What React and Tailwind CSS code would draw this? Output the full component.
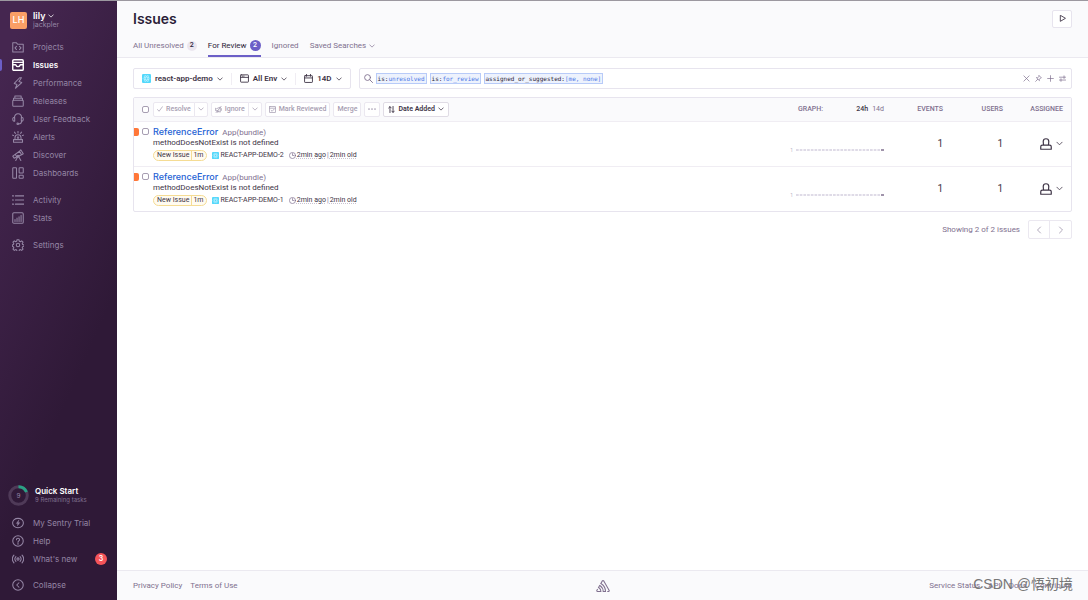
import React from "react";

const shapes = {
  projects: (
    <>
      <path d="M1 2.2h4.6l1.8 2h7.6v10.4H1z" />
      <path d="M6 7.2 4 9.3l2 2.1M10 7.2l2 2.1-2 2.1" />
    </>
  ),
  issues: (
    <>
      <rect x="1" y="1" width="14" height="14" rx="1.5" />
      <path d="M1 4.5h14M1 7.6h3.5c.4 0 .6.2.8.6.5 1.400 1.500 2 2.700 2s2.200-.6 2.700-2c.2-.4.4-.6.8-.6H15" />
    </>
  ),
  performance: <path d="M10.200 1 3 8.600l3.600 1.500L4.600 15 13 7.400 9.300 5.900 12.600 1z" />,
  releases: (
    <>
      <rect x="1" y="7" width="14" height="8" rx="1" />
      <path d="M2 7V4.200h12V7M3.800 4.200V1.200h8.400v3" />
    </>
  ),
  feedback: (
    <>
      <path d="M3.200 6.500C3.200 3.400 5.200 1 8 1s4.800 2.400 4.800 5.500M12.800 10.500c0 2.300-1.600 4-4.200 4" />
      <path d="M3.600 6H2.500C1.500 6 1 7 1 8.400s.5 2.400 1.500 2.400h1.100zM12.400 6h1.100c1 0 1.500 1 1.500 2.400s-.5 2.400-1.500 2.400h-1.100z" />
      <circle cx="7.600" cy="14.300" r="1" />
    </>
  ),
  alerts: (
    <>
      <path d="M4 11.500V8.800C4 6.500 5.800 5 8 5s4 1.500 4 3.800v2.700M2 11.500h12V15H2zM8 .5v2M3.300 1.500l1.200 1.600M12.700 1.500l-1.200 1.600M.5 5.500l1.600.6M15.500 5.500l-1.600.6" />
      <path d="M8 7.500v3M7 9h2" />
    </>
  ),
  discover: (
    <>
      <path d="M1 9.500 10 3l2.800 4.600-9.900 4.600zM10 3l1.700-1.900 3.300 5.200-2.200 1.300M4.500 7.200l1.800 3.200" />
      <path d="M7.500 10.500 5 15.300M8.800 10l3 5.300" />
      <circle cx="8" cy="9.700" r="1.300" />
    </>
  ),
  dashboards: (
    <>
      <rect x="1" y="1" width="5" height="14" rx=".8" />
      <rect x="9.500" y="1" width="5.500" height="7" rx=".8" />
      <rect x="9.500" y="11" width="5.500" height="4" rx=".8" />
    </>
  ),
  activity: <path d="M4.500 2.500H16M4.500 8H16M4.500 13.500H16M.5 2.500h1.500M.5 8h1.500M.5 13.500h1.500" />,
  stats: (
    <>
      <rect x="1" y="1" width="14" height="14" rx="1.500" />
      <path d="M4 12.500V10M6.700 12.500V8M9.400 12.500V6.500M12.100 12.500v-8" />
    </>
  ),
  settings: (
    <>
      <path d="M6.700 1h2.600l.5 2 1.300.6 1.800-1.100 1.800 1.800-1.100 1.800.6 1.300 2 .5v1.800l-2 .5-.6 1.400 1.100 1.800-1.800 1.800-1.800-1.100-1.300.6-.5 2H6.700l-.5-2-1.300-.6-1.800 1.100-1.800-1.800 1.100-1.800-.6-1.400-1.300-.3V7.700l1.300-.3.600-1.300-1.100-1.800 1.800-1.800 1.800 1.100L6.200 3z" />
      <circle cx="8" cy="8" r="2.300" />
    </>
  ),
  trial: (
    <>
      <ellipse cx="8" cy="8" rx="7.200" ry="6.200" />
      <path d="M8.800 4.500 5.800 8.500h2L7.300 11.500l3-4h-2z" fill="currentColor" strokeWidth=".6" />
    </>
  ),
  help: (
    <>
      <circle cx="8" cy="8" r="7" />
      <path d="M5.900 6.400c0-1.300.9-2.100 2.100-2.100s2.100.8 2.100 1.900c0 1.600-2.100 1.600-2.100 3.300M8 11v1.300" />
    </>
  ),
  broadcast: (
    <>
      <circle cx="8" cy="8" r="1.500" />
      <path d="M5.200 4.800C3.700 6.500 3.700 9.500 5.200 11.200M10.800 4.800c1.500 1.700 1.500 4.700 0 6.400M2.600 2.800c-2.500 3-2.500 7.400 0 10.400M13.400 2.800c2.500 3 2.500 7.400 0 10.400" />
    </>
  ),
  collapse: (
    <>
      <circle cx="8" cy="8" r="7" />
      <path d="M9.300 5 6.300 8l3 3" />
    </>
  ),
  down: <path d="m2 5 6 6 6-6" />,
  left: <path d="m11 2-6 6 6 6" />,
  right: <path d="m5 2 6 6-6 6" />,
  play: <path d="M3 1.500v13L14 8z" />,
  window: (
    <>
      <rect x="1" y="1.500" width="14" height="13" rx="1" />
      <path d="M1 6h14M4 3.800h.8M6.500 3.800h.8" />
    </>
  ),
  calendar: (
    <>
      <rect x="1" y="3" width="14" height="12" rx="1" />
      <path d="M1 7h14M4.500 .5V4M11.500 .5V4" />
    </>
  ),
  search: (
    <>
      <circle cx="6.300" cy="6.300" r="5.200" />
      <path d="m10.200 10.200 5 5" />
    </>
  ),
  close: <path d="m2 2 12 12M14 2 2 14" />,
  pin: <path d="m9.500 1.500 5 5-2 .5-2.500 2.800.2 3.200L3 6l3.200.1L9 3.500zM6.300 9.700 1.500 14.500" />,
  plus: <path d="M8 1.500v13M1.500 8h13" />,
  sliders: <path d="M1 5h14M11.500 2v6M15 11.500H1M4.500 8.500v6" />,
  check: <path d="m1.500 9.500 4 4.500L14.500 2" />,
  mute: <path d="M1 6v4.500h3L12 14V2.500L4 6zM5 10.500V14h2.500v-2.500M14.500 6v4M2.500 15 14 1" />,
  reviewed: (
    <>
      <rect x="1" y="1" width="14" height="14" rx="1" />
      <path d="M1 5h14M5 10l2.200 2L11.500 7.500" />
    </>
  ),
  sort: <path d="M4.500 15V1.500M1.500 4.500l3-3 3 3M11.500 1v13.500M8.500 11.500l3 3 3-3" />,
  clock: (
    <>
      <circle cx="8" cy="8" r="7" />
      <path d="M8 3.500V8h3.500" />
    </>
  ),
  user: <path d="M5.200 9.500C4.300 8.500 4.300 6.500 4.300 4.700 4.300 2.300 5.800 1 8 1s3.700 1.300 3.700 3.700c0 1.800 0 3.800-.9 4.800M5.200 9.500h5.600M5.200 9.500H3C1.800 9.500 1 10.400 1 11.700V15h14v-3.300c0-1.300-.8-2.200-2-2.200h-2.200" />,
};

function Icon({ name, className = "size-3", weight = 1.4 }) {
  return (
    <svg
      viewBox="0 0 16 16"
      className={"shrink-0 " + className}
      fill="none"
      stroke="currentColor"
      strokeWidth={weight}
      strokeLinecap="round"
      strokeLinejoin="round"
      aria-hidden="true"
    >
      {shapes[name]}
    </svg>
  );
}

function ReactBadge({ className }) {
  return (
    <svg viewBox="0 0 16 16" className={"shrink-0 " + className} aria-hidden="true">
      <rect width="16" height="16" rx="2" fill="#53d8fb" />
      <g fill="none" stroke="#c4f3ff" strokeWidth="1">
        <ellipse cx="8" cy="8" rx="6" ry="2.400" />
        <ellipse cx="8" cy="8" rx="6" ry="2.400" transform="rotate(60 8 8)" />
        <ellipse cx="8" cy="8" rx="6" ry="2.400" transform="rotate(120 8 8)" />
      </g>
    </svg>
  );
}

const navGroups = [
  [
    ["projects", "Projects"],
    ["issues", "Issues"],
    ["performance", "Performance"],
    ["releases", "Releases"],
    ["feedback", "User Feedback"],
    ["alerts", "Alerts"],
    ["discover", "Discover"],
    ["dashboards", "Dashboards"],
  ],
  [
    ["activity", "Activity"],
    ["stats", "Stats"],
  ],
  [["settings", "Settings"]],
];

function NavItem({ icon, label, active, badge }) {
  return (
    <a
      href="#"
      aria-current={active ? "page" : undefined}
      className={
        "relative flex h-[18px] items-center gap-[9px] pl-3 pr-[10px] text-[8px] " +
        (active ? "font-semibold text-white" : "text-[#9586a5]")
      }
    >
      {active && <span className="absolute left-0 top-[3px] h-3 w-[2px] rounded-r-sm bg-[#6c5fc7]" />}
      <Icon name={icon} weight={active ? 1.9 : 1.4} />
      <span>{label}</span>
      {badge && (
        <span className="ml-auto flex size-3 items-center justify-center rounded-full bg-[#f55459] text-[7px] font-semibold text-white">
          {badge}
        </span>
      )}
    </a>
  );
}

function Sidebar() {
  return (
    <aside className="flex w-[117px] shrink-0 flex-col bg-[linear-gradient(294deg,#2f1937_36%,#452650_92%)] pb-[6px] pt-[10px] font-[Inter,sans-serif]">
      <button type="button" className="flex items-center gap-[6px] pl-[10px] text-left">
        <span className="flex size-[17px] items-center justify-center rounded-[2px] bg-[#fa9f66] text-[9px] font-medium text-white">LH</span>
        <span className="flex flex-col">
          <span className="flex items-center gap-[3px] text-[9px] font-semibold leading-[9px] text-white">
            lily <Icon name="down" className="size-[6px]" weight={2} />
          </span>
          <span className="text-[7px] leading-[9px] text-[#9586a5]">jackpler</span>
        </span>
      </button>
      <nav aria-label="Main" className="mt-[9px] flex flex-col gap-[9px]">
        {navGroups.map((group, i) => (
          <div key={i}>
            {group.map(([icon, label]) => (
              <NavItem key={label} icon={icon} label={label} active={label === "Issues"} />
            ))}
          </div>
        ))}
      </nav>
      <div className="mt-auto">
        <button type="button" className="flex items-center gap-[6px] pl-2 text-left">
          <svg viewBox="0 0 42 42" className="size-[21px]" aria-hidden="true">
            <circle cx="21" cy="21" r="17.500" fill="none" stroke="#4f3a58" strokeWidth="6" />
            <path d="M21 3.500A17.500 17.500 0 0 1 37 14" fill="none" stroke="#2ba185" strokeWidth="6" />
            <text x="21" y="26" textAnchor="middle" fontSize="13" fill="#9586a5">9</text>
          </svg>
          <span className="flex flex-col">
            <span className="text-[8px] font-semibold leading-[9px] text-white">Quick Start</span>
            <span className="text-[6px] leading-[8px] text-[#80708f]">9 Remaining tasks</span>
          </span>
        </button>
        <div className="mt-[8px]">
          <NavItem icon="trial" label="My Sentry Trial" />
          <NavItem icon="help" label="Help" />
          <NavItem icon="broadcast" label="What's new" badge="3" />
        </div>
        <div className="mt-[8px]">
          <NavItem icon="collapse" label="Collapse" />
        </div>
      </div>
    </aside>
  );
}

function Header() {
  const tab = "flex h-[21px] items-center gap-[3px] border-b-2 ";
  return (
    <header className="border-b border-[#ebe9f0] bg-[#fafafc] px-4">
      <div className="flex h-[35px] items-center justify-between">
        <h1 className="font-[Inter,sans-serif] text-[14px] font-semibold text-[#2b1d38]">Issues</h1>
        <button type="button" aria-label="Play tour" className="flex h-[18px] w-5 items-center justify-center rounded-[2px] border border-[#e7e4ee] bg-white text-[#3e3446]">
          <Icon name="play" className="size-[7px]" weight={2} />
        </button>
      </div>
      <nav aria-label="Issue tabs" className="flex gap-[11px] text-[8px] text-[#80708f]">
        <a href="#" className={tab + "border-transparent"}>
          All Unresolved
          <span className="flex size-[10px] items-center justify-center rounded-full bg-[#ebe6ef] text-[7px] font-medium text-[#2b1d38]">2</span>
        </a>
        <a href="#" aria-current="page" className={tab + "border-[#6c5fc7] text-[#2b1d38]"}>
          For Review
          <span className="flex size-[11px] items-center justify-center rounded-full bg-[#6c5fc7] text-[7px] font-medium text-white">2</span>
        </a>
        <a href="#" className={tab + "border-transparent"}>Ignored</a>
        <button type="button" className={tab + "border-transparent"}>
          Saved Searches <Icon name="down" className="size-[6px]" weight={1.800} />
        </button>
      </nav>
    </header>
  );
}

const tokens = [
  ["is:", "unresolved"],
  ["is:", "for_review"],
  ["assigned_or_suggested:", "[me, none]"],
];

function Filters() {
  const item = "flex h-3 items-center gap-1 px-2";
  return (
    <div className="flex gap-2">
      <div className="flex h-[21px] shrink-0 items-center divide-x divide-[#f0edf3] rounded-[2px] border border-[#e7e4ee] text-[8px] font-semibold text-[#3e3446]">
        <button type="button" className={item}>
          <ReactBadge className="size-[9px]" />
          react-app-demo <Icon name="down" className="size-[6px]" weight={2} />
        </button>
        <button type="button" className={item}>
          <Icon name="window" className="size-[9px]" weight={1.600} />
          All Env <Icon name="down" className="size-[6px]" weight={2} />
        </button>
        <button type="button" className={item}>
          <Icon name="calendar" className="size-[9px]" weight={1.600} />
          14D <Icon name="down" className="size-[6px]" weight={2} />
        </button>
      </div>
      <div role="search" className="flex h-[21px] min-w-0 flex-1 items-center rounded-[2px] border border-[#e7e4ee] pl-1 pr-[5px] text-[#80708f]">
        <Icon name="search" className="size-[9px]" weight={1.600} />
        <div className="ml-[3px] flex gap-[3px] whitespace-nowrap font-['DejaVu_Sans_Mono',monospace] text-[6px] leading-[9px]">
          {tokens.map(([key, value]) => (
            <span key={value} className="border border-[#b8cbf8] bg-[#edf2fd] px-px text-[#2b1d38]">
              {key}
              <span className="text-[#4b77e6]">{value}</span>
            </span>
          ))}
        </div>
        <input aria-label="Search issues" className="h-4 min-w-0 flex-1 bg-transparent text-[7px] outline-none" />
        <div className="flex gap-[5px]">
          {[["close", "Clear search"], ["pin", "Pin search"], ["plus", "Add saved search"], ["sliders", "Search builder"]].map(([name, label]) => (
            <button key={name} type="button" aria-label={label}>
              <Icon name={name} className="size-[7px]" weight={1.600} />
            </button>
          ))}
        </div>
      </div>
    </div>
  );
}

function Toolbar() {
  const btn = "flex h-[15px] items-center gap-[3px] whitespace-nowrap rounded-[2px] border border-[#ebe8f0] bg-white px-[3px] text-[7px] font-medium text-[#a79eb2]";
  return (
    <div className="flex items-center gap-[3px] pl-2">
      <input type="checkbox" aria-label="Select all issues" className="mr-px size-[7px] appearance-none rounded-[2px] border border-[#a79eb2] bg-white" />
      <div className="flex">
        <button type="button" className={btn + " rounded-r-none"}>
          <Icon name="check" className="size-[6px]" weight={2} /> Resolve
        </button>
        <button type="button" aria-label="Resolve options" className={btn + " -ml-px rounded-l-none"}>
          <Icon name="down" className="size-[6px]" weight={2} />
        </button>
      </div>
      <div className="flex">
        <button type="button" className={btn + " rounded-r-none"}>
          <Icon name="mute" className="size-[7px]" weight={1.800} /> Ignore
        </button>
        <button type="button" aria-label="Ignore options" className={btn + " -ml-px rounded-l-none"}>
          <Icon name="down" className="size-[6px]" weight={2} />
        </button>
      </div>
      <button type="button" className={btn}>
        <Icon name="reviewed" className="size-[7px]" weight={1.800} /> Mark Reviewed
      </button>
      <button type="button" className={btn}>Merge</button>
      <button type="button" aria-label="More actions" className={btn}>
        <svg viewBox="0 0 16 4" className="h-[2px] w-2" fill="currentColor" aria-hidden="true">
          <circle cx="2" cy="2" r="1.700" />
          <circle cx="8" cy="2" r="1.700" />
          <circle cx="14" cy="2" r="1.700" />
        </svg>
      </button>
      <button type="button" className="flex h-[15px] items-center gap-[3px] whitespace-nowrap rounded-[2px] border border-[#e0dce5] bg-white px-1 text-[7px] font-semibold text-[#3e3446]">
        <Icon name="sort" className="size-[7px]" weight={2} /> Date Added
        <Icon name="down" className="size-[6px]" weight={2} />
      </button>
    </div>
  );
}

function IssueRow({ id }) {
  return (
    <tr className="h-[45px] border-t border-[#f0edf3]">
      <td className="p-0 align-top">
        <div className="flex pt-[5px]">
          <span className="mt-px h-2 w-[5px] rounded-r-[2px] bg-[#ff7738]" />
          <input type="checkbox" aria-label={"Select " + id} className="ml-[3px] mt-px size-[7px] appearance-none rounded-[2px] border border-[#a79eb2] bg-white" />
          <div className="ml-1 whitespace-nowrap">
            <div className="flex items-baseline gap-1 leading-[10px]">
              <a href="#" className="font-[Inter,sans-serif] text-[9px] font-medium text-[#2562d4]">ReferenceError</a>
              <span className="text-[8px] text-[#80708f]">App(bundle)</span>
            </div>
            <div className="text-[8px] leading-[10px] text-[#3e3446]">methodDoesNotExist is not defined</div>
            <div className="mt-[2px] flex items-center gap-[5px] text-[7px] leading-[9px] text-[#3e3446]">
              <span className="flex rounded-full border border-[#f5dc94] bg-[#fffbf0] px-[3px]">
                New Issue<span className="ml-[2px] border-l border-[#f5dc94] pl-px">1m</span>
              </span>
              <span className="flex items-center gap-px">
                <ReactBadge className="size-[7px]" />
                {id}
              </span>
              <span className="flex items-center gap-px">
                <Icon name="clock" className="size-[7px] text-[#80708f]" weight={1.600} />
                <span className="underline decoration-[#c9c3d1] decoration-dotted underline-offset-1">2min ago</span>
                <span className="text-[#80708f]">|</span>
                <span className="underline decoration-[#c9c3d1] decoration-dotted underline-offset-1">2min old</span>
              </span>
            </div>
          </div>
        </div>
      </td>
      <td className="p-0">
        <div className="mt-[13px] flex items-center justify-end gap-[3px]">
          <span className="text-[5px] leading-[5px] text-[#b9b2c6]">1</span>
          <svg viewBox="0 0 88 2" className="h-[2px] w-[88px]" aria-hidden="true">
            <path d="M0 1h84" stroke="#d5d0df" strokeWidth="1.400" strokeDasharray="2.700 1" />
            <path d="M85 1h3" stroke="#80708f" strokeWidth="1.400" />
          </svg>
        </div>
      </td>
      <td className="p-0 text-right text-[10px]">1</td>
      <td className="p-0 text-right text-[10px]">1</td>
      <td className="p-0 pr-2">
        <button type="button" aria-label={"Assign " + id} className="ml-auto flex items-center gap-1">
          <Icon name="user" className="size-3" weight={1.600} />
          <Icon name="down" className="size-[7px]" weight={1.800} />
        </button>
      </td>
    </tr>
  );
}

function IssueTable() {
  const head = "p-0 text-right text-[7px] font-medium text-[#80708f]";
  return (
    <div className="mt-2 overflow-hidden rounded-[2px] border border-[#e7e4ee]">
      <table className="w-full table-fixed border-collapse text-[#3e3446]">
        <colgroup>
          <col />
          <col className="w-[100px]" />
          <col className="w-[59px]" />
          <col className="w-[60px]" />
          <col className="w-[68px]" />
        </colgroup>
        <thead className="bg-[#fafafc]">
          <tr className="h-[23px]">
            <th className="p-0 text-left font-normal"><Toolbar /></th>
            <th className={head}>
              <div className="flex items-center justify-between pl-[14px]">
                GRAPH:
                <span className="flex gap-1 text-[7px] font-normal">
                  <button type="button" className="font-medium text-[#3e3446]">24h</button>
                  <button type="button">14d</button>
                </span>
              </div>
            </th>
            <th className={head}>EVENTS</th>
            <th className={head}>USERS</th>
            <th className={head + " pr-2"}>ASSIGNEE</th>
          </tr>
        </thead>
        <tbody>
          <IssueRow id="REACT-APP-DEMO-2" />
          <IssueRow id="REACT-APP-DEMO-1" />
        </tbody>
      </table>
    </div>
  );
}

function Footer() {
  return (
    <footer className="relative grid h-[30px] grid-cols-3 items-center border-t border-[#ebe9f0] bg-[#fafafc] px-4 text-[8px] text-[#80708f]">
      <div className="flex gap-2">
        <a href="#">Privacy Policy</a>
        <a href="#">Terms of Use</a>
      </div>
      <a href="#" aria-label="Sentry" className="justify-self-center">
        <svg viewBox="0 0 50 44" className="h-3 w-[14px]" fill="#80708f" aria-hidden="true">
          <path d="M29,2.260a4.670,4.670,0,0,0-8,0L14.420,13.530A32.210,32.210,0,0,1,32.170,40.190H27.550A27.680,27.680,0,0,0,12.090,17.470L6,28a15.920,15.920,0,0,1,9.230,12.170H4.620A.76.76,0,0,1,4,39.060l2.940-5a10.740,10.740,0,0,0-3.360-1.900l-2.910,5a4.540,4.540,0,0,0,1.690,6.240A4.660,4.660,0,0,0,4.620,44H19.150a19.400,19.400,0,0,0-8-17.310l2.310-4A23.870,23.870,0,0,1,23.760,44H36.070a35.880,35.880,0,0,0-16.410-31.800l4.670-8a.77.77,0,0,1,1.050-.27c.53.29,20.290,34.770,20.660,35.170a.76.76,0,0,1-.68,1.130H40.600q.09,1.910,0,3.810h4.780A4.590,4.590,0,0,0,50,39.430a4.490,4.490,0,0,0-.62-2.280Z" />
        </svg>
      </a>
      <div className="flex justify-end gap-2">
        <a href="#">Service Status</a>
        <a href="#">API</a>
        <a href="#">Docs</a>
        <a href="#">Contribute</a>
      </div>
      <span className="pointer-events-none absolute right-[15px] top-[3px] whitespace-nowrap font-['Liberation_Sans','Noto_Sans_CJK_SC',sans-serif] text-[14px] leading-5 text-[#777777]">
        CSDN @悟初境
      </span>
    </footer>
  );
}

export default function App() {
  return (
    <div className="flex min-h-screen border-t border-[#9c98a0] bg-white font-[Roboto,sans-serif] leading-normal">
      <Sidebar />
      <div className="flex min-w-0 flex-1 flex-col">
        <Header />
        <main className="flex-1 px-4 pt-[10px]">
          <Filters />
          <IssueTable />
          <div className="mt-2 flex items-center justify-end gap-2 text-[8px] text-[#80708f]">
            <span>Showing 2 of 2 issues</span>
            <div className="flex divide-x divide-[#ebe8f0] rounded-[2px] border border-[#ebe8f0] text-[#a79eb2]">
              <button type="button" aria-label="Previous page" className="flex h-[17px] w-[21px] items-center justify-center">
                <Icon name="left" className="size-2" weight={1.800} />
              </button>
              <button type="button" aria-label="Next page" className="flex h-[17px] w-[21px] items-center justify-center">
                <Icon name="right" className="size-2" weight={1.800} />
              </button>
            </div>
          </div>
        </main>
        <Footer />
      </div>
    </div>
  );
}
